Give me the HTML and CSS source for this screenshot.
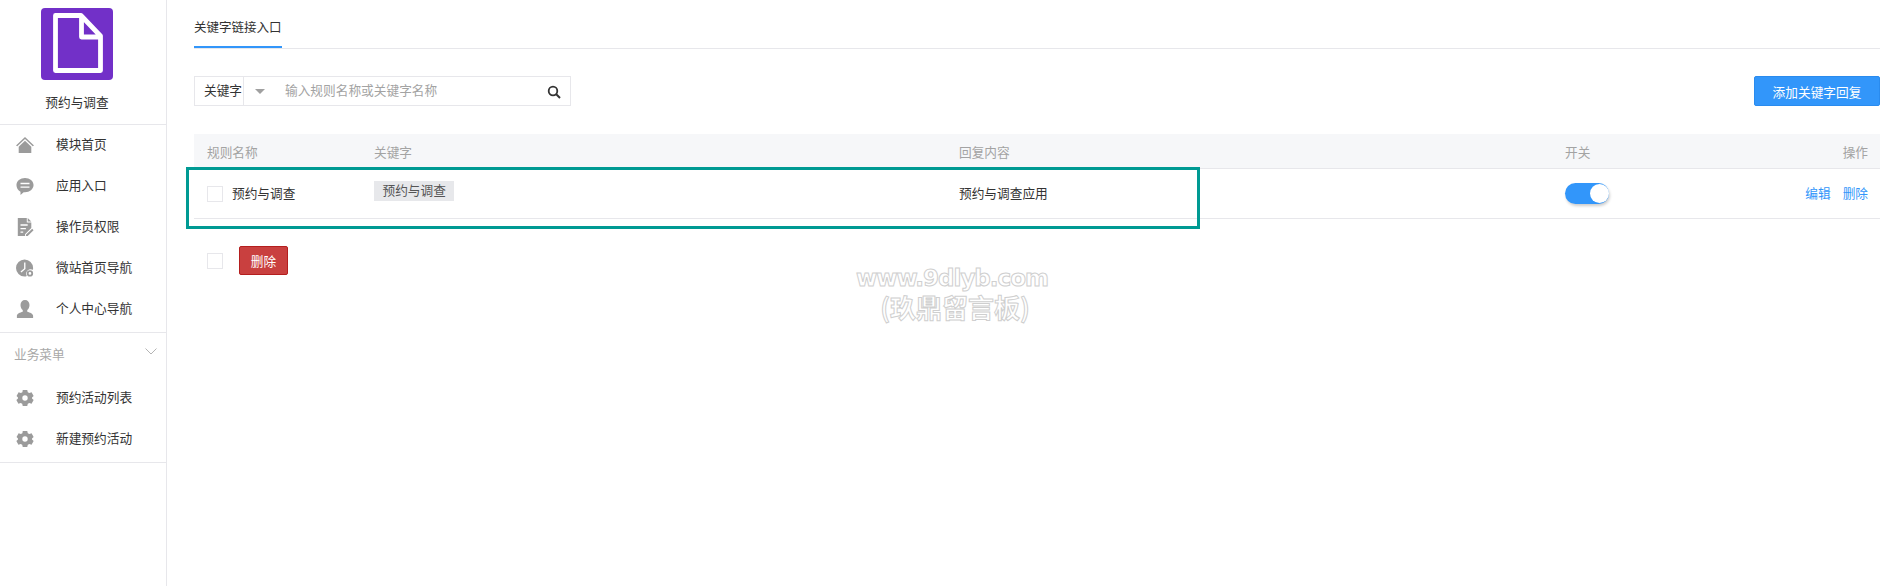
FILE: index.html
```html
<!DOCTYPE html>
<html lang="zh-CN">
<head>
<meta charset="utf-8">
<title>关键字链接入口</title>
<link rel="stylesheet" href="styles.css">
</head>
<body>
<div class="page">
  <aside class="sidebar">
    <div class="brand">
      <div class="logo">
        <svg viewBox="0 0 72 72" width="72" height="72"><path d="M14.500 7.500H40L59.500 28V62.500H14.500Z M40.500 8V29H59.500" fill="none" stroke="#fff" stroke-width="4.800" stroke-linejoin="round"/></svg>
      </div>
      <div class="brand-name">预约与调查</div>
    </div>
    <nav class="nav-group">
      <a class="nav-item"><svg class="nav-icon" viewBox="0 0 20 20"><path d="M10 1L0 10.500l1.400 1L10 3.400l8.600 8.100 1.400-1z"/><path d="M3 12l7-6.600 7 6.600v7H3z"/></svg><span>模块首页</span></a>
      <a class="nav-item"><svg class="nav-icon" viewBox="0 0 20 20"><path fill-rule="evenodd" d="M10 1c5.200 0 9.500 3.400 9.500 8s-4.300 8-9.500 8H8.500L5 20v-3.700C2.200 15 .5 12.200.5 9 .5 4.400 4.800 1 10 1zM5 6.500V8h10V6.500zM5 10.500V12h10v-1.500z"/></svg><span>应用入口</span></a>
      <a class="nav-item"><svg class="nav-icon" viewBox="0 0 20 20"><path fill-rule="evenodd" d="M2 0h10v5h5v6l-7 7v2H2zM5 7v1.500h8V7zM5 11v1.500h6V11zM5 15v1.500h3V15z"/><path d="M13 0l4 4h-4zM18 12l1.500 1.500L13 20h-2v-1.500z"/></svg><span>操作员权限</span></a>
      <a class="nav-item"><svg class="nav-icon" viewBox="0 0 20 20"><path fill-rule="evenodd" d="M9.500 0.500a9.500 9.500 0 0 1 9.500 9.500q0 1-.2 2a5 5 0 0 0-6.800 6.800q-1.200.7-2.500.7a9.500 9.500 0 0 1 0-19zM9 4v6.500L5 14l1 1 4.500-4V4z"/><path fill-rule="evenodd" d="M15.500 12.500a3.500 3.500 0 1 1 0 7 3.500 3.500 0 0 1 0-7zm0 2a1.500 1.500 0 1 0 0 3 1.500 1.500 0 0 0 0-3z"/></svg><span>微站首页导航</span></a>
      <a class="nav-item"><svg class="nav-icon" viewBox="0 0 20 20"><path d="M10 0c3 0 5 2.300 5 5.500 0 2.500-1 4.500-2.500 5.700v1.800c3 .8 6.500 2.200 6.500 4.500V20H1v-2.500c0-2.300 3.500-3.700 6.500-4.500v-1.800C6 10 5 8 5 5.500 5 2.300 7 0 10 0z"/></svg><span>个人中心导航</span></a>
    </nav>
    <nav class="nav-group nav-group-last">
      <div class="nav-title"><span>业务菜单</span><svg class="chevron" viewBox="0 0 12 7"><path d="M.5.500L6 6l5.500-5.500" fill="none" stroke="#b4b4b4"/></svg></div>
      <a class="nav-item"><svg class="nav-icon" viewBox="0 0 20 20"><path fill-rule="evenodd" d="M7.500 1h5l.6 2.500 1.700 1 2.500-.8 2.300 4-1.800 1.800v1l1.800 1.800-2.300 4-2.500-.8-1.700 1-.6 2.500h-5l-.6-2.500-1.700-1-2.500.8-2.300-4 1.800-1.800v-1L.6 7.700l2.300-4 2.500.8 1.700-1zM10 7a3 3 0 1 0 0 6 3 3 0 0 0 0-6z"/></svg><span>预约活动列表</span></a>
      <a class="nav-item"><svg class="nav-icon" viewBox="0 0 20 20"><path fill-rule="evenodd" d="M7.500 1h5l.6 2.500 1.700 1 2.500-.8 2.300 4-1.800 1.800v1l1.800 1.800-2.300 4-2.500-.8-1.700 1-.6 2.500h-5l-.6-2.500-1.700-1-2.500.8-2.300-4 1.800-1.800v-1L.6 7.700l2.300-4 2.500.8 1.700-1zM10 7a3 3 0 1 0 0 6 3 3 0 0 0 0-6z"/></svg><span>新建预约活动</span></a>
    </nav>
  </aside>

  <main class="main">
    <div class="tabs"><a class="tab">关键字链接入口</a></div>

    <div class="toolbar">
      <div class="search">
        <div class="search-label">关键字</div>
        <div class="search-select"><i class="caret"></i></div>
        <div class="search-input">输入规则名称或关键字名称</div>
        <div class="search-btn"><svg viewBox="0 0 14 14" width="14" height="14"><circle cx="6" cy="6" r="4.300" fill="none" stroke="#333" stroke-width="1.800"/><path d="M9 9l4 4" stroke="#333" stroke-width="2"/></svg></div>
      </div>
      <button class="btn-primary">添加关键字回复</button>
    </div>

    <div class="table">
      <div class="row head">
        <div class="col-name">规则名称</div>
        <div class="col-key">关键字</div>
        <div class="col-reply">回复内容</div>
        <div class="col-switch">开关</div>
        <div class="col-ops">操作</div>
      </div>
      <div class="row body">
        <div class="col-name name-cell"><i class="check"></i><span>预约与调查</span></div>
        <div class="col-key"><span class="tag">预约与调查</span></div>
        <div class="col-reply reply-cell">预约与调查应用</div>
        <div class="col-switch"><span class="switch"><i class="knob"></i></span></div>
        <div class="col-ops ops-cell"><a class="link">编辑</a><a class="link">删除</a></div>
      </div>
    </div>

    <div class="bulk"><i class="check"></i><button class="btn-danger">删除</button></div>
  </main>
</div>

<div class="highlight"></div>
<div class="watermark"><div class="wm-1">www.9dlyb.com</div><div class="wm-2">(玖鼎留言板)</div></div>
</body>
</html>
```
FILE: styles.css
```css
* { box-sizing: border-box; }
html, body { margin: 0; height: 100%; background: #fff; }
body {
  position: relative;
  overflow: hidden;
  font-family: "Noto Sans CJK SC", "Liberation Sans", sans-serif;
  font-size: 12.700px;
  color: #333;
}
.page { display: flex; height: 586px; }

/* sidebar */
.sidebar { width: 167px; flex: none; border-right: 1px solid #e7e7eb; }
.brand { height: 125px; border-bottom: 1px solid #e7e7eb; padding: 8px 12px 0 0; display: flex; flex-direction: column; align-items: center; }
.logo { width: 72px; height: 72px; background: #7230c8; border-radius: 4px; }
.logo svg { display: block; }
.brand-name { margin-top: 12px; line-height: 20px; }
.nav-group { border-bottom: 1px solid #e7e7eb; padding-bottom: 2px; }
.nav-item { display: flex; align-items: center; height: 41px; padding: 0 0 2px 16px; line-height: 20px; }
.nav-item span { padding-bottom: 2px; }
.nav-icon { width: 18px; height: 18px; fill: #9b9b9b; margin-right: 22px; flex: none; }
.nav-title { display: flex; align-items: flex-start; justify-content: space-between; height: 45px; padding: 11px 9px 0 14px; color: #a8a8a8; line-height: 20px; }
.chevron { width: 12px; height: 7px; margin-top: 4px; }

/* main */
.main { flex: 1; padding: 0 21px 0 27px; min-width: 0; }
.tabs { height: 49px; border-bottom: 1px solid #e7e7eb; }
.tab { display: inline-block; width: 88px; height: 48px; padding-top: 15px; line-height: 24px; border-bottom: 2px solid #3296fa; font-size: 12.500px; }

.toolbar { display: flex; justify-content: space-between; align-items: flex-start; margin-top: 27px; }
.search { width: 377px; height: 30px; display: flex; align-items: center; border: 1px solid #e7e7eb; }
.search-label { width: 49px; height: 28px; line-height: 26px; padding-left: 9px; border-right: 1px solid #e7e7eb; white-space: nowrap; }
.search-select { width: 41px; padding-left: 11px; display: flex; align-items: center; }
.caret { width: 0; height: 0; border: 5px solid transparent; border-top: 5px solid #a0a0a0; border-bottom: 0; }
.search-input { flex: 1; color: #a3a3a3; line-height: 26px; height: 28px; }
.search-btn { width: 32px; height: 28px; display: flex; align-items: center; justify-content: center; padding-top: 1px; }

.btn-primary { width: 126px; height: 30px; padding: 0; background: #3296fa; border: 1px solid #2a8bee; border-radius: 2px; color: #fff; font: inherit; }

.table { margin-top: 28px; }
.row { display: flex; align-items: center; }
.head { height: 35px; background: #f6f7f9; color: #a3a3a3; border-bottom: 1px solid #e7e7eb; }
.body { height: 50px; border-bottom: 1px solid #e7e7eb; }
.col-name { width: 180px; padding-left: 13px; }
.col-key { width: 585px; }
.col-reply { width: 606px; }
.col-switch { width: 150px; }
.col-ops { flex: 1; text-align: right; padding-right: 12px; }
.name-cell { display: flex; align-items: center; gap: 9px; }
.name-cell span, .reply-cell, .ops-cell { padding-bottom: 2px; }
.check { display: block; width: 16px; height: 16px; border: 1px solid #e7e7eb; background: #fff; flex: none; }
.tag { display: inline-block; height: 20px; line-height: 18px; padding: 0 8.500px; background: #e7e8eb; color: #555; margin-bottom: 5px; vertical-align: top; }
.switch { display: block; width: 44px; height: 21px; border-radius: 11px; background: #3296fa; position: relative; box-shadow: 1px 2px 3px rgba(0,0,0,.2); }
.knob { position: absolute; right: 0; top: 1px; width: 19px; height: 19px; border-radius: 50%; background: #fff; }
.link { color: #3296fa; margin-left: 12px; }

.bulk { display: flex; align-items: center; margin-top: 27px; padding-left: 13px; gap: 16px; }
.btn-danger { width: 49px; height: 29px; padding: 0; border: 1px solid #b41e1e; border-radius: 2px; background: #c9403f; color: #fff; font: inherit; }

/* annotation and watermark, drawn over the page */
.highlight { position: absolute; left: 186px; top: 167px; width: 1014px; height: 62px; border: 3px solid #009a93; }
.watermark { position: absolute; left: 800px; top: 263px; width: 310px; text-align: center; color: #fff; -webkit-text-stroke: 1px #cfcfcf; font-weight: 700; }
.wm-1 { font-family: "DejaVu Sans", sans-serif; font-size: 23px; line-height: 30px; letter-spacing: -1px; padding-right: 6px; }
.wm-2 { font-size: 26px; line-height: 27px; }
```
